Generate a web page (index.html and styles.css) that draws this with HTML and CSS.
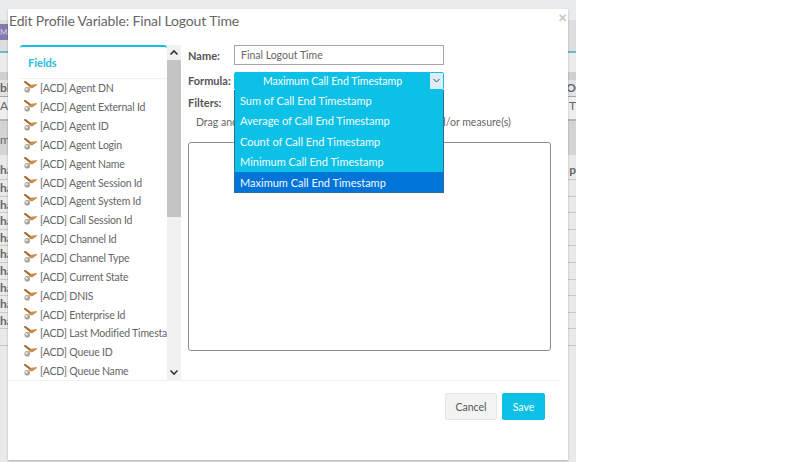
FILE: index.html
```html
<!DOCTYPE html>
<html lang="en">
<head>
<meta charset="utf-8">
<title>Edit Profile Variable</title>
<link rel="stylesheet" href="styles.css">
</head>
<body>
<div class="stage">
  <div class="app">
    <div class="app-top"></div>
    <div class="app-nav"><span class="app-tab">M</span></div>
    <div class="app-line"></div>
    <div class="app-gap"></div>
    <div class="app-strip"></div>
    <div class="app-head"><span>bl</span><span>O</span></div>
    <div class="app-sub"><span>Ar</span><span>: T</span></div>
    <div class="app-band"><span>m</span></div>
    <div class="app-row app-row-b"><span>ha</span><span>p</span></div>
    <div class="app-row"><span>ha</span></div>
    <div class="app-row"><span>ha</span></div>
    <div class="app-row"><span>ha</span></div>
    <div class="app-row"><span>ha</span></div>
    <div class="app-row"><span>ha</span></div>
    <div class="app-row"><span>ha</span></div>
    <div class="app-row"><span>ha</span></div>
    <div class="app-row"><span>ha</span></div>
    <div class="app-row"><span>ha</span></div>
    <div class="app-row"></div>
    <div class="app-rest"></div>
  </div>
  <div class="modal">
    <div class="modal-head">
      <h1 class="modal-title">Edit Profile Variable: Final Logout Time</h1>
      <span class="modal-close">×</span>
    </div>
    <div class="modal-body">
      <div class="fields">
        <div class="fields-panel">
          <div class="fields-title">Fields</div>
          <ul class="field-list">
            <li class="field"><svg class="hier" viewBox="0 0 14 12"><use href="#hier"/></svg><span>[ACD] Agent DN</span></li>
            <li class="field"><svg class="hier" viewBox="0 0 14 12"><use href="#hier"/></svg><span>[ACD] Agent External Id</span></li>
            <li class="field"><svg class="hier" viewBox="0 0 14 12"><use href="#hier"/></svg><span>[ACD] Agent ID</span></li>
            <li class="field"><svg class="hier" viewBox="0 0 14 12"><use href="#hier"/></svg><span>[ACD] Agent Login</span></li>
            <li class="field"><svg class="hier" viewBox="0 0 14 12"><use href="#hier"/></svg><span>[ACD] Agent Name</span></li>
            <li class="field"><svg class="hier" viewBox="0 0 14 12"><use href="#hier"/></svg><span>[ACD] Agent Session Id</span></li>
            <li class="field"><svg class="hier" viewBox="0 0 14 12"><use href="#hier"/></svg><span>[ACD] Agent System Id</span></li>
            <li class="field"><svg class="hier" viewBox="0 0 14 12"><use href="#hier"/></svg><span>[ACD] Call Session Id</span></li>
            <li class="field"><svg class="hier" viewBox="0 0 14 12"><use href="#hier"/></svg><span>[ACD] Channel Id</span></li>
            <li class="field"><svg class="hier" viewBox="0 0 14 12"><use href="#hier"/></svg><span>[ACD] Channel Type</span></li>
            <li class="field"><svg class="hier" viewBox="0 0 14 12"><use href="#hier"/></svg><span>[ACD] Current State</span></li>
            <li class="field"><svg class="hier" viewBox="0 0 14 12"><use href="#hier"/></svg><span>[ACD] DNIS</span></li>
            <li class="field"><svg class="hier" viewBox="0 0 14 12"><use href="#hier"/></svg><span>[ACD] Enterprise Id</span></li>
            <li class="field"><svg class="hier" viewBox="0 0 14 12"><use href="#hier"/></svg><span>[ACD] Last Modified Timestamp</span></li>
            <li class="field"><svg class="hier" viewBox="0 0 14 12"><use href="#hier"/></svg><span>[ACD] Queue ID</span></li>
            <li class="field"><svg class="hier" viewBox="0 0 14 12"><use href="#hier"/></svg><span>[ACD] Queue Name</span></li>
          </ul>
        </div>
        <div class="scrollbar">
          <svg class="sb-arrow" viewBox="0 0 14 15"><path d="M3.500 9.500 7 6 10.500 9.500"/></svg>
          <div class="sb-thumb"></div>
          <div class="sb-fill"></div>
          <svg class="sb-arrow" viewBox="0 0 14 15"><path d="M3.500 5.500 7 9 10.500 5.500"/></svg>
        </div>
      </div>
      <div class="form">
        <div class="form-row form-row-name">
          <label class="form-label">Name:</label>
          <div class="name-input">Final Logout Time</div>
        </div>
        <div class="form-row form-row-formula">
          <label class="form-label">Formula:</label>
          <div class="select">
            <div class="select-value">
              <span class="select-text">Maximum Call End Timestamp</span>
              <span class="select-btn"><svg viewBox="0 0 13 15"><path d="M3.500 6 6.500 9 9.500 6"/></svg></span>
            </div>
            <ul class="select-menu">
              <li class="option">Sum of Call End Timestamp</li>
              <li class="option">Average of Call End Timestamp</li>
              <li class="option">Count of Call End Timestamp</li>
              <li class="option">Minimum Call End Timestamp</li>
              <li class="option option-active">Maximum Call End Timestamp</li>
            </ul>
          </div>
        </div>
        <div class="form-label filters-label">Filters:</div>
        <div class="filters-hint">Drag and drop fields below to filter your attributes and/or measure(s)</div>
        <div class="drop-box"></div>
      </div>
    </div>
    <div class="modal-foot">
      <button class="btn btn-cancel">Cancel</button>
      <button class="btn btn-save">Save</button>
    </div>
  </div>
</div>
<svg class="defs" width="0" height="0">
  <defs>
    <g id="hier">
      <circle cx="3.200" cy="8.800" r="2.800" fill="#a5a195"/>
      <circle cx="2.600" cy="8.200" r="1.200" fill="#e6e3da"/>
      <path d="M1.200 1 6.500 5.200" stroke="#a8682c" stroke-width="2.200" fill="none" stroke-linecap="round"/>
      <path d="M5 6.500 7 3.800 13 3 12.500 4.500 8 7.500Z" fill="#c98f4c"/>
    </g>
  </defs>
</svg>
</body>
</html>
```
FILE: styles.css
```css
* { box-sizing: border-box; }
html, body { margin: 0; padding: 0; background: #fff; }
body { font-family: Lato, "Open Sans", sans-serif; overflow: hidden; }
.defs { position: absolute; }
.stage { position: relative; width: 576px; height: 462px; overflow: hidden; }

.app { display: flex; flex-direction: column; height: 100%; background: #e8e8e9; color: #666; font-size: 12px; }
.app-top { height: 20px; background: #e9ebef; }
.app-nav { height: 31px; background: #dcdee0; padding-top: 4px; }
.app-tab { display: block; width: 8px; height: 16px; background: #8679ad; color: #d8d4e6; font-size: 8px; line-height: 16px; }
.app-line { height: 2px; background: #5fbcd4; }
.app-gap { height: 19px; background: #ececed; }
.app-strip { height: 8px; background: #cfcfd1; }
.app-head, .app-sub, .app-row { display: flex; justify-content: space-between; }
.app-head { height: 17px; background: #e2e2e3; border-bottom: 1px solid #a9a9a9; line-height: 15px; font-weight: 700; }
.app-sub { height: 23px; background: #eeeeef; border-bottom: 1px solid #b5b5b5; line-height: 18px; }
.app-band { height: 35px; background: #d4d4d6; border-top: 1px solid #b5b5b5; line-height: 38px; }
.app-row { height: 16.600px; background: #e9e9ea; border-bottom: 1px solid #c9c9c9; line-height: 16px; font-weight: 700; }
.app-row-b { height: 25px; line-height: 29px; }
.app-rest { flex: 1; background: #e9e9ea; }

.modal { position: absolute; left: 8px; top: 9px; width: 560px; height: 451px; background: #fff; box-shadow: 0 1px 2px rgba(0,0,0,.25); display: flex; flex-direction: column; }
.modal-head { height: 36px; position: relative; padding: 2px 0 0 1px; }
.modal-title { margin: 0; font-size: 14px; letter-spacing: -.15px; font-weight: 400; line-height: 20px; color: #666; }
.modal-close { position: absolute; right: 1px; top: 0; font-size: 15px; line-height: 16px; font-weight: 700; color: #c4c4c4; }

.modal-body { display: flex; height: 336px; padding-left: 12px; border-bottom: 1px solid #f2f2f2; margin-right: 8px; }
.fields { display: flex; width: 161px; height: 100%; flex: none; }
.fields-panel { width: 147px; border-top: 2px solid #18bde0; border-radius: 3px 3px 0 0; overflow: hidden; }
.fields-title { height: 32px; padding-left: 8px; font-size: 11px; font-weight: 700; line-height: 32px; color: #26bcdc; border-bottom: 1px solid #f2f2f2; }
.field-list { list-style: none; margin: 0; padding: 0; }
.field { display: flex; align-items: center; height: 18.850px; white-space: nowrap; font-size: 10.500px; letter-spacing: -.2px; color: #666; }
.hier { width: 14px; height: 12px; flex: none; margin: 0 2px 2px 4px; }
.scrollbar { width: 14px; display: flex; flex-direction: column; background: #f1f1f1; }
.sb-arrow { width: 14px; height: 15px; flex: none; fill: none; stroke: #333; stroke-width: 1.600; }
.sb-thumb { height: 157px; background: #c4c4c4; }
.sb-fill { flex: 1; }

.form { flex: 1; padding: 0 0 0 7px; }
.form-label { width: 46px; flex: none; font-size: 11px; font-weight: 700; color: #555; }
.form-row { display: flex; align-items: center; }
.form-row-name { height: 20px; }
.name-input { width: 210px; height: 20px; border: 1px solid #a6a6a6; padding-left: 6px; font-size: 10.500px; line-height: 18px; color: #666; }
.form-row-formula { position: relative; height: 17px; margin-top: 7px; }
.select { position: relative; width: 210px; }
.select-value { display: flex; height: 18px; background: #0cc0e6; border: 1px solid #0cc0e6; border-radius: 2px; color: #fff; font-size: 10.500px; line-height: 16px; }
.select-text { flex: 1; text-align: center; }
.select-btn { width: 13px; height: 16px; background: #dcecf5; display: block; }
.select-btn svg { display: block; width: 13px; height: 15px; fill: none; stroke: #444; stroke-width: 1; }
.select-menu { position: absolute; left: 0; top: 18px; width: 210px; margin: 0; padding: 0; list-style: none; background: #0cc0e6; border: 1px solid #2a6f96; border-top: 0; z-index: 2; }
.option { height: 20.500px; padding: 1px 0 0 5px; font-size: 11px; line-height: 20px; color: #f4fbfd; white-space: nowrap; }
.option-active { background: #0074d9; }
.filters-label { margin-top: 6px; line-height: 15px; }
.filters-hint { margin-top: 5px; padding-left: 8px; font-size: 10.500px; line-height: 15px; color: #666; white-space: nowrap; }
.drop-box { width: 363px; height: 209px; margin-top: 12px; border: 1px solid #8c8c8c; border-radius: 3px; }

.modal-foot { display: flex; justify-content: flex-end; gap: 5px; padding: 12px 23px 0 0; }
.btn { height: 27px; border-radius: 2px; font-family: inherit; font-size: 10.500px; padding: 0; }
.btn-cancel { width: 52px; background: #f3f3f3; border: 1px solid #e6e6e6; color: #555; }
.btn-save { width: 43px; background: #0cc0e6; border: 1px solid #0cc0e6; color: #fff; }
```
